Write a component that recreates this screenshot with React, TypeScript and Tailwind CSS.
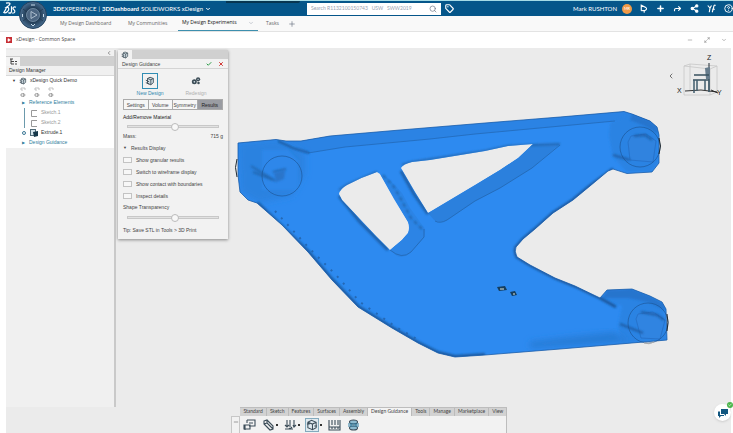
import type { ReactNode } from "react";
import {
  Check,
  ChevronDown,
  ChevronLeft,
  CircleHelp,
  Forward,
  Maximize2,
  Minus,
  Play,
  Plus,
  Search,
  Share2,
  Tag,
  X,
} from "lucide-react";

const dashboardTabs = [
  { label: "My Design Dashboard", width: "w-[68px]" },
  { label: "My Communities", width: "w-[54px]" },
  { label: "My Design Experiments", width: "w-20", active: true },
  { label: "Tasks", width: "w-[22px]" },
];

const ribbonTabs = [
  "Standard",
  "Sketch",
  "Features",
  "Surfaces",
  "Assembly",
  "Design Guidance",
  "Tools",
  "Manage",
  "Marketplace",
  "View",
];

const displayOptions = [
  "Show granular results",
  "Switch to wireframe display",
  "Show contact with boundaries",
  "Inspect details",
];

function DsLogo() {
  return (
    <svg viewBox="0 0 14 13" className="h-[13px] w-3.5" fill="none" stroke="white" strokeWidth="1.2">
      <path d="M3 1.2C7 .2 8.2 1.5 5.5 3.8L3.5 5.2C6.5 5 6.2 8 4.5 9.5C3.3 10.6 1.5 11 .8 10.6C2 9 3 7.5 3.5 5.2" />
      <path d="M8.5 4.2V9.5C8 11.5 6.5 11.5 5.5 10.5M13 5.2C10.8 4.4 9 5.8 10.5 7.3C12.5 9 12.5 11 9.2 11.2" />
    </svg>
  );
}

function Compass() {
  return (
    <svg viewBox="0 0 28 28" className="size-7">
      <defs>
        <radialGradient id="compass">
          <stop offset="0" stopColor="#5c7793" />
          <stop offset=".45" stopColor="#38546f" />
          <stop offset=".55" stopColor="#243f59" />
          <stop offset="1" stopColor="#4a6f92" />
        </radialGradient>
      </defs>
      <circle cx="14" cy="14" r="13.5" fill="url(#compass)" stroke="#23415d" />
      <circle cx="14" cy="14" r="6.5" fill="#4b6581" stroke="#8aa3b9" strokeWidth=".6" />
      <path d="M12 10.5L18 14L12 17.5Z" fill="none" stroke="#b5c6d5" strokeWidth=".9" />
      <path d="M4 8L8 11M24 8L20 11M4 20L8 17M24 20L20 17" stroke="#213850" strokeWidth=".8" />
      <path d="M12 4H16M3.5 13V16M24.500 13V16M12 23L14 25L16 23" stroke="#c7dbea" fill="none" />
    </svg>
  );
}

function PartIcon({ className = "size-2.5" }: { className?: string }) {
  return (
    <svg viewBox="0 0 12 12" className={className} fill="none" stroke="#34444f" strokeWidth="1">
      <path d="M3 3L6 1.5L10 3V8L7 10.5L3 9Z" fill="#d4e0e6" />
      <path d="M3 3L7 4.5L10 3M7 4.5V10.5M1 5L5 7M1 8L5 9.5" />
    </svg>
  );
}

function GearsIcon() {
  return (
    <svg viewBox="0 0 12 12" className="size-2.5" fill="#3c4d57">
      <circle cx="4" cy="7" r="3" />
      <circle cx="8.5" cy="4" r="2.5" />
      <circle cx="9" cy="8.5" r="1.5" />
      <circle cx="4" cy="7" r="1" fill="#d5e1e8" />
      <circle cx="8.5" cy="4" r=".8" fill="#d5e1e8" />
    </svg>
  );
}

function IconButton({ label, children }: { label: string; children: ReactNode }) {
  return (
    <button type="button" aria-label={label} className="flex shrink-0 items-center justify-center">
      {children}
    </button>
  );
}

function Header() {
  return (
    <header className="relative flex h-4 shrink-0 items-center border-t border-[#a5dbe6] bg-[#05568a] text-[6px] text-white">
      <span className="absolute left-[226px] top-0 h-0.5 w-[74px] rounded-br-sm bg-[#073651]" />
      <div className="flex w-[307px] shrink-0 items-center pl-[3px]">
        <DsLogo />
        <button aria-label="Compass" className="absolute left-[19px] top-0 z-10">
          <Compass />
        </button>
        <h1 className="ml-9 flex items-center whitespace-nowrap font-normal">
          <b>3D</b>EXPERIENCE<span className="mx-0.5">|</span>
          <b className="mr-0.5">3DDashboard</b>SOLIDWORKS xDesign
          <ChevronDown className="ml-0.5 size-1.5" strokeWidth={4} />
        </h1>
      </div>
      <label className="flex h-3 w-[134px] items-center bg-white pr-1">
        <input
          aria-label="Search"
          placeholder="Search R1132100150743   USW   SWW2019"
          className="min-w-0 flex-1 px-1 text-[5px] text-gray-500 outline-none placeholder:text-gray-400"
        />
        <Search className="size-2 text-gray-500" />
      </label>
      <button aria-label="Tags" className="ml-1">
        <Tag className="size-[9px]" strokeWidth={3} />
      </button>
      <div className="ml-auto flex items-center">
        <span>Mark RUSHTON</span>
        <span className="ml-[5px] flex size-2.5 items-center justify-center rounded-full bg-[#f09a48] text-[4px]">
          MR
        </span>
        <div className="ml-[7px] flex gap-2">
          <IconButton label="Notifications">
            <svg viewBox="0 0 12 12" className="size-[9px]" fill="none" stroke="currentColor" strokeWidth="1.5">
              <path d="M3 9V1.5L9 4.5C11 6 10 8 8 8.500L3 9M6 10.5H8" />
            </svg>
          </IconButton>
          <IconButton label="Add">
            <Plus className="size-[9px]" strokeWidth={4} />
          </IconButton>
          <IconButton label="Share">
            <Forward className="size-[9px]" strokeWidth={3} />
          </IconButton>
          <IconButton label="Network">
            <Share2 className="size-[9px]" strokeWidth={3} fill="currentColor" />
          </IconButton>
          <IconButton label="Tools">
            <svg viewBox="0 0 12 12" className="size-[9px]" fill="none" stroke="currentColor" strokeWidth="1.5">
              <path d="M1 2L4 5.5L6 2M4 5.5L3 11M7 11L9 4C9 2 10 1 11.5 2M7 7H10.5" />
            </svg>
          </IconButton>
          <IconButton label="Help">
            <CircleHelp className="size-[9px]" strokeWidth={2.5} />
          </IconButton>
        </div>
      </div>
    </header>
  );
}

function DashboardNav() {
  return (
    <nav className="flex h-4 shrink-0 items-stretch border-b border-[#e3e3e3] bg-[#f9f9f9] pl-[60px] font-['Open_Sans',sans-serif] text-[5px] text-[#666]">
      {dashboardTabs.map((tab) => (
        <a
          key={tab.label}
          href="#"
          className={`flex items-center whitespace-nowrap ${tab.width} ${
            tab.active ? "-ml-1 mr-2 justify-between border-b border-[#3d8fae] px-1 text-[#111]" : ""
          }`}
        >
          {tab.label}
          {tab.active && <ChevronDown className="size-1.5 shrink-0 text-gray-400" />}
        </a>
      ))}
      <button aria-label="Add tab">
        <Plus className="size-2 text-gray-500" />
      </button>
    </nav>
  );
}

function DesignManager() {
  return (
    <aside className="mt-0.5 flex h-[357px] w-[110px] shrink-0 flex-col border-r-2 border-[#c9c9c9] bg-[#f0f0f0] text-[5px] text-[#333]">
      <div className="flex h-[7px] items-center justify-end border-b border-[#cfcfcf] pr-0.5">
        <ChevronLeft className="size-1.5" />
      </div>
      <div className="flex h-[9px] bg-[#d0d0d0]">
        <div className="flex w-3.5 items-center justify-center bg-[#f4f4f4]">
          <svg viewBox="0 0 9 8" className="h-2 w-[9px]" fill="none" stroke="#444">
            <path d="M1 1H4M2 1V6H5M2 3.5H5M6 3.5H8M6 6H8" />
          </svg>
        </div>
      </div>
      <h2 className="flex h-2.5 items-center border-b border-[#d9d9d9] pl-[3px]">Design Manager</h2>
      <ul className="bg-white">
        <li className="flex h-2.5 items-center gap-[3px] pl-1.5">
          <span className="text-[4px]">▼</span>
          <PartIcon className="size-2" />
          xDesign Quick Demo
        </li>
        <li className="flex h-3 items-center gap-2 pl-3.5">
          {["Origin", "Planes", "Axes"].map((name) => (
            <svg
              key={name}
              aria-label={name}
              viewBox="0 0 6 11"
              className="h-[11px] w-1.5"
              fill="none"
              stroke="#b5b5b5"
              strokeWidth=".8"
            >
              <path d="M1 3V1H5V3M1 3H3" />
              <path d="M1 9V7L4 6.5V9.5ZM3 8H5.5" stroke="#888" />
            </svg>
          ))}
        </li>
        <li className="flex h-2.5 items-center gap-1 pl-4 text-[#2f7d9c]">
          <span className="text-[4px]">▶</span>Reference Elements
        </li>
        <li className="ml-[18px] border-l border-[#6c9aac] text-[#999]">
          <ul>
            {["Sketch.1", "Sketch.2"].map((name) => (
              <li key={name} className="flex h-2.5 items-center gap-[3px] pl-1.5">
                <svg viewBox="0 0 7 7" className="size-[7px]" fill="none" stroke="#999">
                  <path d="M6 .5H.5V6.5H6" />
                </svg>
                {name}
              </li>
            ))}
          </ul>
        </li>
        <li className="flex h-2.5 items-center gap-1 pl-4">
          <span className="size-1 rounded-full border border-[#3b7896]" />
          <span className="flex items-center gap-0.5">
            <svg viewBox="0 0 9 8" className="h-2 w-[9px]">
              <rect x=".5" y=".5" width="5" height="6" fill="#d6e5eb" stroke="#506b78" />
              <path d="M3 3L8 2V7L4 8Z" fill="#17384a" />
            </svg>
            Extrude.1
          </span>
        </li>
        <li className="flex h-2.5 items-center gap-1 pl-4 text-[#2f7d9c]">
          <span className="text-[4px]">▶</span>Design Guidance
        </li>
      </ul>
    </aside>
  );
}

function Slider({ label, value }: { label: string; value: number }) {
  return (
    <input
      type="range"
      aria-label={label}
      defaultValue={value}
      className="mx-1 block h-2 w-[92px] appearance-none bg-transparent [&::-webkit-slider-runnable-track]:h-[3px] [&::-webkit-slider-runnable-track]:border [&::-webkit-slider-runnable-track]:border-[#c8c8c8] [&::-webkit-slider-runnable-track]:bg-[#e2e2e2] [&::-webkit-slider-thumb]:-mt-[3px] [&::-webkit-slider-thumb]:size-2 [&::-webkit-slider-thumb]:appearance-none [&::-webkit-slider-thumb]:rounded-full [&::-webkit-slider-thumb]:border [&::-webkit-slider-thumb]:border-[#bbb] [&::-webkit-slider-thumb]:bg-[#f8f8f8]"
    />
  );
}

function GuidancePanel() {
  return (
    <section className="absolute left-0 top-0.5 w-[110px] bg-[#f2f2f2] text-[5px] leading-[6px] text-[#444] shadow-[0_1px_3px_#888]">
      <div className="flex h-[9px] bg-[#d0d0d0]">
        <div className="flex w-3.5 items-center justify-center bg-[#f2f2f2]">
          <PartIcon className="size-2" />
        </div>
      </div>
      <div className="flex h-2.5 items-center border-b border-[#d4d4d4] px-1">
        <h2>Design Guidance</h2>
        <button aria-label="Accept" className="ml-auto mr-1.5">
          <Check className="size-1.5 text-[#2d9c48]" strokeWidth={4} />
        </button>
        <button aria-label="Cancel">
          <X className="size-1.5 text-[#d13b38]" strokeWidth={4} />
        </button>
      </div>
      <div className="flex h-[30px] gap-4 pl-[17px] pt-1">
        <button className="flex w-[30px] flex-col items-center gap-px text-[#2f86ad]">
          <span className="flex size-4 items-center justify-center border border-[#318db4]">
            <PartIcon />
          </span>
          New Design
        </button>
        <button className="flex w-[30px] flex-col items-center gap-px text-[#b0b0b0]">
          <span className="flex size-4 items-center justify-center">
            <GearsIcon />
          </span>
          Redesign
        </button>
      </div>
      <div className="mx-[5px] grid h-[11px] grid-cols-4 divide-x divide-[#aaa] border border-[#aaa]">
        {["Settings", "Volume", "Symmetry", "Results"].map((tab) => (
          <button key={tab} className={tab === "Results" ? "bg-[#9a9ca2] text-[#222]" : "bg-[#f6f6f6]"}>
            {tab}
          </button>
        ))}
      </div>
      <div className="px-[5px] pb-1.5 pt-1">
        <p className="text-[#222]">Add/Remove Material</p>
        <div className="pt-0.5">
          <Slider label="Add/Remove Material" value={52} />
        </div>
        <p className="mt-[3px] flex justify-between">
          Mass:<span>715 g</span>
        </p>
        <button className="mt-1.5 flex items-center gap-1">
          <span className="text-[4px]">▼</span>Results Display
        </button>
        <div className="mt-1.5 flex flex-col gap-1.5">
          {displayOptions.map((option) => (
            <label key={option} className="flex h-1.5 items-center gap-1">
              <input
                type="checkbox"
                className="h-1.5 w-[9px] appearance-none border border-[#c3c3c3] bg-[#f7f7f7] checked:bg-[#318db4]"
              />
              {option}
            </label>
          ))}
        </div>
        <p className="mt-[5px]">Shape Transparency</p>
        <div className="pt-[3px]">
          <Slider label="Shape Transparency" value={53} />
        </div>
        <p className="mt-1.5">Tip: Save STL in Tools &gt; 3D Print</p>
      </div>
    </section>
  );
}

const armOutline =
  "M238 143L276 139.5L286 141L301 141L330 136L400 130L485 123L560 117L624 111.5L632 114L650 121L657 127L659 135V163L652 172L627 173.5L613 169L608 171L590 186L573 200L553 213L535 229L523 239L516 247Q514 251 517 257L530 265L555 278L575 286L600 298L607 290L632 289L650 296L662 302L666 309L667 340L620 344L560 349L485 355L455 357L438 353L418 343L392 328L358 307L332 280L308 252L282 225L257 203L248 200L240 192L238 175Z";

const armHoles =
  "M339 194Q340 189 347 185Q362 177 377 172L380 174L394 199L408 222Q410 228 408 233L402 240L390 250L375 235L342 200ZM401 168Q403 164 412 162L430 160L485 151L508 146L533 144L518 158L500 170L475 185L428 213L415 192Z";

// Suspension arm mesh with its three bolt bosses
function ArmModel() {
  return (
    <svg viewBox="118 48 613 385" className="h-full w-full" role="img" aria-label="Optimised control arm">
      <defs>
        <filter id="soft" x="-20%" y="-20%" width="140%" height="140%">
          <feGaussianBlur stdDeviation=".8" />
        </filter>
        <filter id="haze" x="-20%" y="-20%" width="140%" height="140%">
          <feGaussianBlur stdDeviation="3" />
        </filter>
        <clipPath id="armClip">
          <path d={armOutline + armHoles} clipRule="evenodd" />
        </clipPath>
      </defs>
      <path d={armOutline + armHoles} fillRule="evenodd" fill="#2d8af0" />
      <g clipPath="url(#armClip)">
        <path d="M286 141L330 136L624 111.5L650 120L656 128L615 121L475 134L430 139L345 147L308 153Z" fill="#2b83e4" />
        <path d="M380 174L388 178L402 193L410 208L425 229Q426 235 422 240L411 252Q404 259 397 256L390 250L408 233Q411 228 408 222Z" fill="#2c84e5" />
        <path d="M428 213L434 220Q440 224 447 220L475 201L500 188L532 168L560 144H533L518 158L475 185Z" fill="#2b80dd" />
        <path d="M238 143L276 139L305 153V174L292 196L258 203L240 192Z" fill="#2b82e0" filter="url(#haze)" />
        <path d="M262 150H288L298 160V190H262Z" fill="#2e87ea" filter="url(#soft)" />
        <path d="M610 123L632 114L658 128L658 163L651 172L627 172L613 157L609 136Z" fill="#2b83e3" filter="url(#soft)" />
        <path d="M632 114L650 121L657 127L658 134L645 126L630 120Z" fill="#2574cd" filter="url(#soft)" />
        <path d="M602 298L632 290L663 304L667 341L622 344L618 326L622 306Z" fill="#2b83e3" filter="url(#soft)" />
        <path d="M607 290L632 289L650 296L664 304L666 311L648 302L628 298H602Z" fill="#2574cd" filter="url(#soft)" />
        <path d="M530 342L570 337L615 332L628 342L530 348Z" fill="#277bd6" filter="url(#haze)" />
        <path d="M257 203L308 252L332 280L358 307L392 328L418 343L438 353L455 357L485 355" fill="none" stroke="#1c5ca3" strokeWidth="4" filter="url(#soft)" />
        <path d="M275 211L310 249L336 275L360 302L396 327L420 341" fill="none" stroke="#2468b5" strokeWidth="2" strokeDasharray="2 7" />
        <path d="M308 153L345 147L430 139L475 134L615 121" fill="none" stroke="#2369b8" strokeWidth=".8" />
        <path d="M278 141L293 148L309 153" fill="none" stroke="#174f8d" strokeWidth="1.5" filter="url(#soft)" />
        <path d="M339 196L360 222L388 250M401 171L414 194L428 214" fill="none" stroke="#1f5fa8" strokeWidth="3" filter="url(#soft)" />
        <path d="M383 175L394 187L402 201L411 218L424 231" fill="none" stroke="#1e5d9f" strokeWidth="1.5" strokeDasharray="4 3" filter="url(#soft)" />
        <path d="M339 190L347 185L377 172M402 165L412 162L485 151L508 146L560 144" fill="none" stroke="#2367b2" strokeWidth="2" filter="url(#soft)" />
        <path d="M435 221Q440 224 447 220L475 201L500 188L532 168L560 145M390 250Q402 260 411 252L424 237L424 229" fill="none" stroke="#2366af" strokeWidth=".8" />
        <path d="M613 169L590 186L573 200L553 213L535 229L523 239L516 247Q514 251 517 257L530 265L555 278L575 286L600 298L616 307" fill="none" stroke="#1b569b" strokeWidth="3" filter="url(#soft)" />
        <path d="M251 166L276 181M253 172L273 180M273 172L286 169" fill="none" stroke="#2468b3" strokeWidth="2" filter="url(#soft)" />
        <path d="M274 173L285 170L284 179L276 182Z" fill="#2974ca" filter="url(#soft)" />
        <path d="M631 136L646 134L656 141L653 162L630 160L628 142Z" fill="#3083df" stroke="#266fc5" strokeWidth=".8" />
        <path d="M634 136L645 135L652 140M613 155L630 160" fill="none" stroke="#1f5da6" strokeWidth="2" filter="url(#soft)" />
        <path d="M638 314L653 312L665 320L660 339L641 338L636 319Z" fill="#3084e1" stroke="#266fc5" strokeWidth=".8" />
        <path d="M641 312L657 315L664 320M620 324L643 333" fill="none" stroke="#1f5ca5" strokeWidth="2" filter="url(#soft)" />
      </g>
      <path d={armOutline} fill="none" stroke="#1d5ea9" strokeWidth=".8" strokeLinejoin="round" />
      <g fill="none" stroke="#1b508f" strokeWidth=".6">
        <circle cx="282" cy="176" r="20" />
        <circle cx="640" cy="147" r="20" />
        <circle cx="648" cy="323" r="20" />
      </g>
      <path d="M237 159Q234 167 237 177M659 138Q662 146 659 154M667 314Q669 322 667 331" fill="none" stroke="#202a31" />
      <path d="M644 343Q649 345 654 342" fill="none" stroke="#aaa" />
      <g fill="#163e5e">
        <path d="M497 287L505 286L507 290L499 291Z" />
        <path d="M510 292L515 291L517 295L512 296Z" />
      </g>
      <path d="M500 289H504M513 294H515" stroke="#e3e9d9" />
    </svg>
  );
}

function ViewCube() {
  return (
    <div className="absolute right-1.5 top-1 flex items-center">
      <button aria-label="Hide view cube">
        <ChevronLeft className="size-2 text-[#333]" />
      </button>
      <svg viewBox="676 52 50 48" className="h-12 w-[50px]" fill="none">
        <path d="M685 66L691 64L718 66V92L711 95H685ZM685 66L711 69V95M711 69L718 66M691 64V90" stroke="#c6c6c6" strokeWidth=".8" />
        <path d="M686 91L702 90L718 92" stroke="#333" />
        <path d="M710 63V92" stroke="#202c36" />
        <path d="M706 68L711 67V79H707Z" fill="#677c8c" />
        <path d="M695 75H710M694 80H710" stroke="#38515f" strokeWidth="1.5" />
        <path d="M695 80V93M698 80V91M706 80V90M710 79V92" stroke="#425d6d" strokeWidth="1.5" />
        <path d="M712 90L719 93" stroke="#222" />
        <g fill="#222" fontSize="7">
          <text x="708" y="60">Z</text>
          <text x="678" y="93">X</text>
          <text x="718" y="95">Y</text>
        </g>
      </svg>
    </div>
  );
}

const tools = [
  {
    name: "Load",
    icon: <path d="M4 1H12V7H6M4 1V4M1 6H7V10H1ZM2 6V11M6 4H10" />,
  },
  {
    name: "Fixture",
    menu: true,
    icon: <path d="M2 2L5 1L11 7V10L8 11L2 5ZM2 5L5 4M5 8L8 11M5 1V4L11 10" />,
  },
  {
    name: "Pressure",
    menu: true,
    icon: <path d="M3 1V8M6 1V8M10 1V8M1 6L3 8L5 6M5 9L6 10L8 8M9 6L10 8L12 6M1 10H9" />,
  },
  {
    name: "Generate",
    menu: true,
    active: true,
    icon: <path d="M2 3L6 1L11 3V9L7 11L2 9ZM2 3L7 5L11 3M7 5V11M1 5H4M9 7H12" />,
  },
  {
    name: "Measure",
    icon: <path d="M1 1V11H12V1M4 1V6M7 1V6M10 1V6M1 8H12M4 8V10M7 8V10M10 8V10" />,
  },
  {
    name: "Analyze",
    icon: (
      <>
        <ellipse cx="6.5" cy="3" rx="4" ry="2" fill="#8dbbd0" />
        <ellipse cx="6.5" cy="9" rx="4" ry="2" fill="#8dbbd0" />
        <path d="M1 5H12M1 7H12M4 5V7M9 5V7" stroke="#2f7fa3" />
      </>
    ),
  },
];

function Ribbon() {
  return (
    <div className="absolute bottom-0 left-[18.5%] flex items-end font-[Lato,sans-serif] text-[5px] text-[#444]">
      <div className="flex h-[17px] w-[9px] justify-center border border-b-0 border-[#c7c7c7] bg-[#f2f2f2]">
        <Minus className="mt-0.5 size-1.5" />
      </div>
      <div>
        <div className="flex h-[9px] border-t border-[#bdbdbd] bg-[#d2d2d2]">
          {ribbonTabs.map((tab) => (
            <button
              key={tab}
              className={`whitespace-nowrap border-r border-[#bbb] px-[3px] ${tab === "Design Guidance" ? "bg-[#f3f3f3]" : ""}`}
            >
              {tab}
            </button>
          ))}
        </div>
        <div className="flex h-[17px] items-center gap-[5px] border-r border-[#bdbdbd] bg-[#f2f2f2] pl-0.5">
          {tools.map((tool) => (
            <button key={tool.name} aria-label={tool.name} className="flex items-center gap-px">
              <span
                className={`flex size-3.5 items-center justify-center ${
                  tool.active ? "border border-[#83aabd] bg-[#dfeaf0]" : ""
                }`}
              >
                <svg viewBox="0 0 13 12" className="h-3 w-[13px]" fill="none" stroke="#3c4d59" strokeWidth="1.1">
                  {tool.icon}
                </svg>
              </span>
              {tool.menu && <span className="size-0.5 bg-[#333]" />}
            </button>
          ))}
        </div>
      </div>
    </div>
  );
}

export default function App() {
  return (
    <div className="flex h-screen flex-col overflow-hidden bg-white font-[Lato,sans-serif]">
      <Header />
      <DashboardNav />
      <div className="flex h-4 shrink-0 items-center px-1.5 font-['Open_Sans',sans-serif] text-[5px] text-[#444]">
        <span className="flex size-1.5 items-center justify-center bg-[#c72f35] text-white">
          <Play className="size-1" fill="currentColor" />
        </span>
        <h2 className="ml-1">xDesign - Common Space</h2>
        <div className="ml-auto flex gap-[11px] text-[#777]">
          <IconButton label="Minimize">
            <Minus className="size-1.5" />
          </IconButton>
          <IconButton label="Maximize">
            <Maximize2 className="size-1.5" />
          </IconButton>
          <IconButton label="More">
            <ChevronDown className="size-1.5" />
          </IconButton>
        </div>
      </div>
      <main className="ml-1.5 mr-0.5 flex min-h-0 flex-1 bg-[#ebebeb] font-['Liberation_Sans',Arial,sans-serif]">
        <DesignManager />
        <div className="relative ml-0.5 min-w-0 flex-1">
          <ArmModel />
          <GuidancePanel />
          <ViewCube />
          <Ribbon />
          <button
            aria-label="Messages"
            className="absolute bottom-3 right-0 flex size-[17px] items-center justify-center rounded-full bg-white shadow-sm"
          >
            <svg viewBox="0 0 12 10" className="h-2.5 w-3" fill="#125780">
              <path d="M4 1H11V6H9V8L7 6H4Z" />
              <path d="M1 3.5H3V7H7V8H4L2 10V8H1Z" />
            </svg>
            <span className="absolute -right-0.5 -top-0.5 flex size-1.5 items-center justify-center rounded-full bg-[#4bb54b]">
              <Check className="size-1 text-white" strokeWidth={4} />
            </span>
          </button>
        </div>
      </main>
    </div>
  );
}
